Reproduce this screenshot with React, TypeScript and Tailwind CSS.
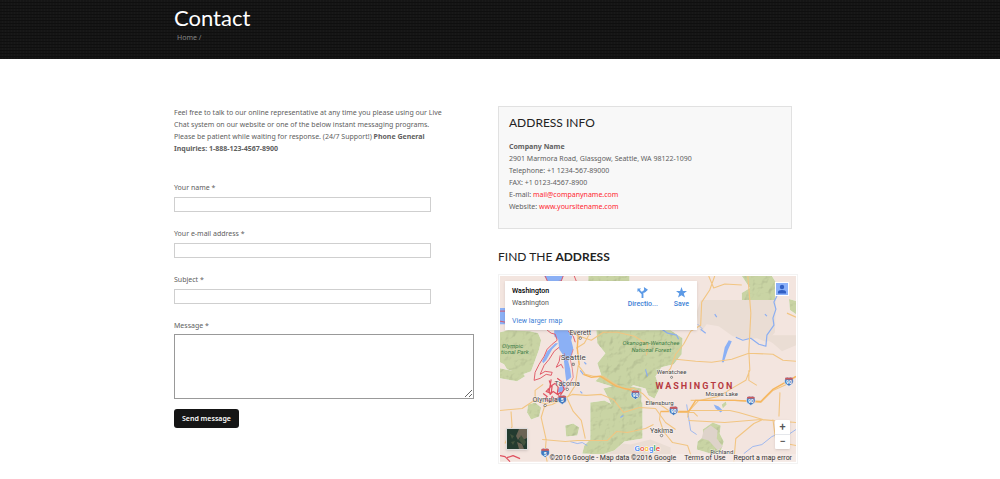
import React from "react";

function Shield({ x, y, n }: { x: number; y: number; n: string }) {
  return (
    <g transform={`translate(${x} ${y})`}>
      <path d="M-3.5-3.5Q-2-4.5 0-3.8Q2-4.5 3.5-3.5Q5.5 1 3 3Q1 4 0 5Q-1 4-3 3Q-5.5 1-3.5-3.5Z" fill="#4479bd" stroke="#f3f6fb" strokeWidth=".6" />
      <path d="M-3.6-3.5Q-2-4.3 0-3.7Q2-4.3 3.6-3.5L4-1.8H-4Z" fill="#cf5a5a" />
      <text y="3" textAnchor="middle" fontSize="5" fontWeight="700" fill="#fff">{n}</text>
    </g>
  );
}

const towns: [string, number, number, number][] = [
  ["Everett", 580, 335, 7], ["Seattle", 573, 360, 8], ["Tacoma", 567, 386, 7],
  ["Olympia", 545, 402, 7], ["Wenatchee", 671, 374, 6], ["Moses Lake", 721, 396, 6],
  ["Ellensburg", 659, 405, 6], ["Yakima", 661, 432, 7], ["Richland", 721, 453, 6],
];

function MapDrawing() {
  return (
    <svg viewBox="500 276 295 185" className="block w-full" fontFamily="Roboto, sans-serif" role="img" aria-label="Map of Washington">
      <defs>
        <filter id="relief" x="0" y="0" width="100%" height="100%">
          <feTurbulence type="fractalNoise" baseFrequency=".13" numOctaves="3" seed="7" result="n" />
          <feDiffuseLighting in="n" surfaceScale="1.2" diffuseConstant="1.15" lightingColor="#fff" result="l"><feDistantLight azimuth="225" elevation="62" /></feDiffuseLighting>
          <feComposite in="l" in2="SourceGraphic" operator="in" result="c" />
          <feBlend in="SourceGraphic" in2="c" mode="multiply" />
        </filter>
      </defs>
      <path fill="#f3e5df" d="M500 276h295v185H500z" />
      <g fill="#eaddd4">
        <path d="M700 300h75l-1 32-8 10-10-4-12 1-12-3-14-10-12-2-6 8-2-4-2-16Z" />
        <path d="M767 335h28v10l-14 6-9-8-5-3Z" />
        <path d="M600 440l30 4 20-5 20 8v14h-70Z" />
      </g>
      <g fill="#c9d4a4" filter="url(#relief)">
        <path d="M500 332l8-2 22 1 8 2 3 7-2 9-4 11-4 11-8 3-7-2-9-3-3-5-4-2Z" />
        <path d="M500 368l9 2 13 2 3 4-8 5-17-3Z" />
        <path d="M588 276h41v6h-41Z" />
        <path d="M596 330h74l12 8-1 16-8 10-12 3-6 9 4 12-5 10-6-3-3-7-12-3-12 5-10-4-16-5 6-6-4-12 8-10-8-10Z" />
        <path d="M590 402l14-2 8 4 12-5 18 3v36l-18 3-10 9-12 4-20-1 2-8 6-6Z" />
        <path d="M603 388l18-4 20 4v20h-28Z" />
        <path d="M528 404l7-2 6 5-2 9-8 3-4-7Z" />
        <path d="M565 425l8-2 6 4-2 8-11 1Z" />
        <path d="M741 276h30l5 8-2 16h-33v-7l8-5Z" />
        <path d="M788 299l7 2v13l-6-4Z" />
        <path d="M702 429l10-7 8 3-1 8 4 8-3 10-10 2-14-4 1-8 6-5Z" />
        <path d="M721 404l4-3 1 3-4 4Z" />
      </g>
      <path fill="#ded3ca" d="M703 430l7-5 7 5-1 8 6 8-5 4-9-10-7-2Z" />
      <g fill="#8bb0f5">
        <path d="M500 308h7l-2 16h-5ZM544 276h19l-2 6h-13Z" />
        <path d="M554 330h14l4 6-1 4 2 8-2 8-3 5 2 8 1 8-5 4-1-8-1-10-1-8-4-6-1-10-4-3Z" />
        <path d="M558 343l-6 6-6 11-3 3-1-2 5-10 8-8ZM563 380l2 6-4 7-4-2Z" />
        <path d="M724 347l4-7 3 1-4 9-4 12h-2ZM713 404l5 2 4 4-2 2-5-4Z" />
      </g>
      <g fill="none" stroke="#8baef2" strokeWidth="1.2" strokeLinejoin="round">
        <path d="M776 296l-3 6 2 7-3 9 1 7-7 10-1 11-7-2-8-6-8 2-7-3M700 329l5 4M660 328l7 5 9 2 2 4" />
        <path d="M686 404l2 13 2 13 6 4M743 453l9-7 9-2 10-8 10-4 8 1 6-4M697 324l5 5M570 441l7 2 5-1 5 3" strokeWidth=".8" />
        <path d="M714 314l2 3M764 314l2 2M620 417l3-2M645 369l2 7M580 370l3 4M584 362l2 2M580 391l2 2" />
      </g>
      <g fill="none" stroke="#df5260" strokeWidth=".9" strokeLinejoin="round">
        <path d="M545 276l3 7 13-2 2-5M574 276l2 5M500 311h6M500 321l5 1M547 330l4 3 4 1 2 6-5 4-5 5-3 7-5 8-4 8-1 8 6-2 6-4 5 1 1-3-7-1-5 3 4-9 5-6 5-8 5-4M560 355l-1 6-3 6 5-3 2 4M568 331l5 5 2 6" />
        <path d="M549 380l2 6-5 5 5 2 1-8 3-2 3 4-1 7 4-2M543 393l4 3-2 3 5 2 2-5 4 5 3-6-6-4-3 3-2-6M557 378l4 3 3 8-4 6M551 379l-2 12M500 455l5 1 5 5M507 457l6-2 7 3" strokeWidth="1.200" />
        <path d="M573 349l-3 10 2 9 1 9-4 7-6 6M566 360l-2-7" strokeWidth=".6" />
      </g>
      <g fill="none" stroke="#f2c582" strokeWidth="1.1" strokeLinejoin="round">
        <path d="M500 410l22-2 12-8 11 3 11-2 16-7 14 1 15-1 12 5 10 13 16-5 16 1 10 14 10 7" />
        <path d="M570 331l9 5 12 4 12-8 14 0 17 4 13 8-1 11M576 348l8-5 5-9M578 365l7 9 8 2 10 0 12 8 10 5 8-1 9 5 8 8 8 2 13 9h22l4 4M578 365l-3 20-7 11-16 8-9 2M545 404l-4 13 5 22-1 13 2 9M542 439l23 2 12-1 30 0 9-9 11 1 18-4 8-4M566 396l7 15 8 9 4 18M511 411l1 15-7 17M543 384l-8 6 0 9" />
        <path d="M714 276l-5 14-8 12-1 23-10 6-7 13-8 10-5 14-4 5M675 359l20 2 16 1 20-3 17-6 24 1 10 6 13 1M747 276l3 37-2 38 1 19-4 10-14 8-13 8-20 4-10 11-1 6M687 410l42 0 9 2 24 7-9 4-18 15-2 23M690 400l44 0 26 2 12-12 14-6 9-8M660 411l-1 8 4 12 9 11 15 3 4 12M688 420l36 2 36-3 35 3M708 276l5 12 11-4 17 1M748 370l0 10 8 5M772 419l3 22 20 4M779 392l-1 24M786 313l9 4" />
      </g>
      <g fill="none" stroke="#f6b65f" strokeWidth="1.4">
        <path d="M579 365l-2-17 1-14M583 374l8 3 9-1 16 10 12 3 9 3M660 411h28l7-11h39l26 1 12-12 23-13" />
      </g>
      <Shield x={562} y={399} n="5" /><Shield x={545} y={452} n="5" /><Shield x={635} y={394} n="90" />
      <Shield x={673} y={410} n="90" /><Shield x={750} y={400} n="90" /><Shield x={788} y={381} n="90" />
      <g textAnchor="middle" fill="#444" stroke="#fff" strokeWidth="1" strokeOpacity=".6" paintOrder="stroke">
        {towns.map(([name, x, y, size]) => <text key={name} x={x} y={y} fontSize={size}>{name}</text>)}
      </g>
      <g fill="#43804a" fontSize="6" fontStyle="italic">
        <text x="502" y="348">Olympic</text><text x="501" y="354">tional Park</text>
        <text x="622" y="345">Okanogan-Wenatchee</text><text x="631" y="352">National Forest</text>
      </g>
      <g fill="#fff" stroke="#555" strokeWidth=".7">
        <circle cx="580" cy="338" r="1.200" /><path d="M572 363h2v2h-2z" /><circle cx="567" cy="389" r="1.200" /><circle cx="545" cy="405" r="1.200" /><circle cx="671" cy="377" r="1" /><circle cx="661" cy="435" r="1.200" />
      </g>
      <text x="655" y="389" fontSize="9" fontWeight="700" letterSpacing="2" fill="#b73a42">WASHINGTON</text>
      <text x="634" y="450" fontSize="8" fontWeight="500" stroke="#fff" strokeWidth="1" paintOrder="stroke">
        <tspan fill="#4285f4">G</tspan><tspan fill="#ea4335">o</tspan><tspan fill="#fbbc05">o</tspan><tspan fill="#4285f4">g</tspan><tspan fill="#34a853">l</tspan><tspan fill="#ea4335">e</tspan>
      </text>
    </svg>
  );
}

function Field({ id, label, type }: { id: string; label: string; type: string }) {
  return (
    <div className="mb-4">
      <label htmlFor={id} className="mb-[3px] block">{label} *</label>
      <input id={id} type={type} className="block h-[15px] w-[257px] max-w-full border border-[#cfcfcf] bg-white px-1" />
    </div>
  );
}

export default function App() {
  return (
    <div className="min-h-screen bg-white font-['Noto_Sans',sans-serif] text-[7px] leading-[12px] text-[#606060]">
      <header className="bg-[#151515] bg-[repeating-linear-gradient(0deg,#0000_0_2px,#0f0f0f_2px_3px),repeating-linear-gradient(90deg,#0000_0_2px,#191919_2px_3px)]">
        <div className="mx-auto h-[59px] max-w-[652px] pt-1">
          <h1 className="font-[Lato,sans-serif] text-[22px] leading-[28px] text-white">Contact</h1>
          <nav aria-label="Breadcrumb" className="pl-[3px] text-[#858585]"><a href="#home">Home</a> /</nav>
        </div>
      </header>
      <main className="mx-auto grid max-w-[652px] grid-cols-2 gap-6 pt-[47px] pr-7">
        <section className="pt-px">
          <p className="mb-[27px] whitespace-nowrap">
            Feel free to talk to our online representative at any time you please using our Live<br />
            Chat system on our website or one of the below instant messaging programs.<br />
            Please be patient while waiting for response. (24/7 Support!) <strong>Phone General<br />
            Inquiries: 1-888-123-4567-8900</strong>
          </p>
          <form>
            <Field id="name" label="Your name" type="text" />
            <Field id="email" label="Your e-mail address" type="email" />
            <Field id="subject" label="Subject" type="text" />
            <label htmlFor="message" className="mb-[2px] block">Message *</label>
            <textarea id="message" className="block h-[65px] w-full resize border border-[#999] bg-white p-1" />
            <button type="button" className="mt-[10px] h-[19px] rounded-[3px] bg-[#151515] px-2 font-semibold text-white">Send message</button>
          </form>
        </section>
        <section>
          <address className="mr-[6px] border border-[#e1e1e1] bg-[#f8f8f8] px-[10px] pt-2 pb-[15px] not-italic">
            <h2 className="mb-[10px] font-[Lato,sans-serif] text-[12px] leading-[16px] text-[#222]">ADDRESS INFO</h2>
            <strong className="block">Company Name</strong>
            <p>2901 Marmora Road, Glassgow, Seattle, WA 98122-1090</p>
            <p>Telephone: +1 1234-567-89000</p>
            <p>FAX: +1 0123-4567-8900</p>
            <p>E-mail: <a href="mailto:mail@companyname.com" className="text-[#ff2630]">mail@companyname.com</a></p>
            <p>Website: <a href="#site" className="text-[#ff2630]">www.yoursitename.com</a></p>
          </address>
          <h2 className="mt-5 mb-[9px] font-[Lato,sans-serif] text-[12px] leading-[16px] text-[#222]">FIND THE <strong>ADDRESS</strong></h2>
          <div className="border border-[#f3f3f3] p-px font-[Roboto,sans-serif]">
            <div className="relative overflow-hidden text-[#333]">
              <MapDrawing />
              <div className="absolute top-[5px] left-[5px] flex h-[49px] w-[192px] justify-between bg-white pt-[4px] pr-2 pl-[7px] shadow-sm">
                <div>
                  <strong className="block font-medium text-black">Washington</strong>
                  <p className="text-[#555]">Washington</p>
                  <a href="#map" className="mt-[6px] block text-[#3b7ed5]">View larger map</a>
                </div>
                <div className="flex gap-4 font-medium text-[#3b7ed5]">
                  <a href="#directions" className="flex flex-col items-center pt-[2px]">
                    <svg viewBox="0 0 12 12" className="size-[11px]" fill="none" stroke="#5c9ae6" strokeWidth="2"><path d="M6 12V7.500L2 3.500M6 8V6l4-3" /><path d="M.5 1.500h4L.5 5.500ZM7.500 0l4.500 3-4 3.500Z" fill="#5c9ae6" stroke="none" /></svg>
                    Directio...
                  </a>
                  <a href="#save" className="flex flex-col items-center pt-[2px]">
                    <svg viewBox="0 0 24 24" className="size-[11px]" fill="#5c9ae6"><path d="m12 0 3 8.500h9l-7 5.500 2.600 9L12 17.800 4.400 23 7 14 0 8.500h9Z" /></svg>
                    Save
                  </a>
                </div>
              </div>
              <button type="button" aria-label="Account" className="absolute top-[6px] right-[7px] size-[14px] border border-white bg-[#8ab0fa]">
                <svg viewBox="0 0 12 12" fill="#315fc4"><circle cx="6" cy="4" r="2.200" /><path d="M2 10.500V9q0-2 4-2t4 2v1.500Z" /></svg>
              </button>
              <button type="button" aria-label="Satellite view" className="absolute bottom-[12px] left-[6px] size-[22px] border border-[#dddddd] bg-[#3b4538] shadow">
                <svg viewBox="0 0 20 20"><path fill="#233b30" d="M0 0h20v20H0Z" /><path fill="#6a6354" d="M12 0h8v9l-4 2-3-3-2 3-2-4ZM10 13l5 2 2 5h-5Z" /><path fill="#42533d" d="m14 6 5 7-2 4-5-6ZM3 5l4 2-2 3ZM4 13l4-1-2 4Z" /></svg>
              </button>
              <div className="absolute right-[6px] bottom-[13px] flex w-[15px] flex-col divide-y divide-gray-200 rounded-[1px] bg-white text-center text-[11px] font-medium leading-[14px] text-[#555] shadow-sm">
                <button type="button" aria-label="Zoom in">+</button>
                <button type="button" aria-label="Zoom out">−</button>
              </div>
              <div className="absolute right-0 bottom-0 flex gap-2 bg-[#f5ece8]/70 pr-1 leading-[8px] whitespace-nowrap">
                <span>©2016 Google - Map data ©2016 Google</span>
                <a href="#terms">Terms of Use</a>
                <a href="#report">Report a map error</a>
              </div>
            </div>
          </div>
        </section>
      </main>
    </div>
  );
}
